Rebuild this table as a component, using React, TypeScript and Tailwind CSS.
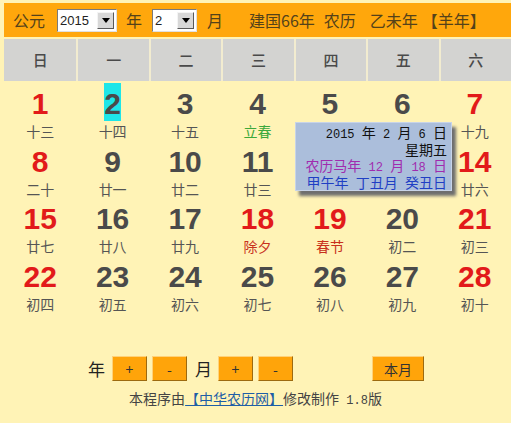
import React from "react";

const cjk = "font-['Noto_Sans_CJK_SC','Noto_Sans',sans-serif]";
const arial = "font-['Liberation_Sans',Arial,sans-serif]";
const mono = "font-['Liberation_Mono','Courier_New',monospace] text-[12px] leading-none";

type Day = { d: number; l: string; red?: boolean; lc?: string; today?: boolean; hidden?: boolean; hideLunar?: boolean };

const days: Day[] = [
  { d: 1, l: "十三", red: true },
  { d: 2, l: "十四", today: true },
  { d: 3, l: "十五" },
  { d: 4, l: "立春", lc: "text-[#3ca83c]" },
  { d: 5, l: "十七", hideLunar: true },
  { d: 6, l: "十八", hideLunar: true },
  { d: 7, l: "十九", red: true },
  { d: 8, l: "二十", red: true },
  { d: 9, l: "廿一" },
  { d: 10, l: "廿二" },
  { d: 11, l: "廿三" },
  { d: 12, l: "廿四", hidden: true },
  { d: 13, l: "廿五", hidden: true },
  { d: 14, l: "廿六", red: true },
  { d: 15, l: "廿七", red: true },
  { d: 16, l: "廿八" },
  { d: 17, l: "廿九" },
  { d: 18, l: "除夕", red: true, lc: "text-[#c8301c]" },
  { d: 19, l: "春节", red: true, lc: "text-[#c8301c]" },
  { d: 20, l: "初二" },
  { d: 21, l: "初三", red: true },
  { d: 22, l: "初四", red: true },
  { d: 23, l: "初五" },
  { d: 24, l: "初六" },
  { d: 25, l: "初七" },
  { d: 26, l: "初八" },
  { d: 27, l: "初九" },
  { d: 28, l: "初十", red: true },
];

const weekdays = ["日", "一", "二", "三", "四", "五", "六"];

function FakeSelect({ value, w }: { value: string; w: string }) {
  return (
    <div
      className={`${w} h-[23px] bg-white border border-t-[#7a7a7a] border-l-[#7a7a7a] border-r-[#e0e0e0] border-b-[#e0e0e0] flex items-center justify-between pl-[2px] pr-[2px]`}
    >
      <span className={`${arial} text-[13px] text-[#222] leading-none`}>{value}</span>
      <span className="w-[17px] h-[17px] bg-[#d8d8d8] border border-t-[#f4f4f4] border-l-[#f4f4f4] border-r-[#5a5a5a] border-b-[#5a5a5a] flex items-center justify-center">
        <svg width="8" height="5" viewBox="0 0 8 5">
          <path d="M0 0 H8 L4 5 Z" fill="#000" />
        </svg>
      </span>
    </div>
  );
}

function Btn({ children, w }: { children: React.ReactNode; w: string }) {
  return (
    <div
      className={`${w} h-[25px] bg-[#ffa40a] border border-t-[#ffd27a] border-l-[#ffd27a] border-r-[#9c6a10] border-b-[#9c6a10] flex items-center justify-center text-[14px] text-[#333] leading-none`}
    >
      {children}
    </div>
  );
}

function TipLine({ children, color }: { children: React.ReactNode; color: string }) {
  return (
    <div className={`h-[16.5px] leading-[16.5px] text-right whitespace-pre ${color}`}>{children}</div>
  );
}

export default function App() {
  return (
    <div className={`${cjk} relative w-[511px] h-[423px] overflow-hidden bg-[#fff3b6] pt-[3px] pl-[4px]`}>
      {/* header */}
      <div className="h-[34px] bg-[#ffa70c] flex items-center pl-[9px] text-[16px] text-[#54421a] leading-none">
        <span>公元</span>
        <div className="ml-[12px]">
          <FakeSelect value="2015" w="w-[60px]" />
        </div>
        <span className="ml-[9px]">年</span>
        <div className="ml-[10px]">
          <FakeSelect value="2" w="w-[45px]" />
        </div>
        <span className="ml-[10px]">月</span>
        <span className="ml-[26px]">建国66年</span>
        <span className="ml-[9px]">农历</span>
        <span className="ml-[14px]">乙未年</span>
        <span className="ml-[4px]">【羊年】</span>
      </div>

      {/* weekday bar */}
      <div className="mt-[2px] h-[42px] grid grid-cols-7 bg-[#d3d3d1]">
        {weekdays.map((w, i) => (
          <div
            key={w}
            className={`flex items-center justify-center text-[15px] font-medium text-[#4a4a4a] ${i > 0 ? "border-l-2 border-[#f2ecd0]" : ""}`}
          >
            {w}
          </div>
        ))}
      </div>

      {/* days */}
      <div className="mt-[2px] grid grid-cols-7">
        {days.map((x) => (
          <div key={x.d} className={`h-[57.5px] flex flex-col items-center ${x.hidden ? "invisible" : ""}`}>
            <span
              className={`${arial} font-bold text-[30px] leading-[35px] h-[38px] pt-[3px] ${
                x.red ? "text-[#e21a1a]" : "text-[#4a4a4a]"
              } ${x.today ? "bg-[#1ee6e8]" : ""}`}
            >
              {x.d}
            </span>
            <span className={`text-[14px] leading-[18px] mt-[1px] ${x.lc ?? "text-[#555]"} ${x.hideLunar ? "invisible" : ""}`}>
              {x.l}
            </span>
          </div>
        ))}
      </div>

      {/* tooltip */}
      <div className="absolute left-[295px] top-[122px] w-[157px] h-[69px] bg-[#abbedb] border border-[#c8d4e8] shadow-[4px_5px_3px_#6e6e6e] pr-[4px] pt-[1px] text-[14px]">
        <TipLine color="text-[#111]">
          <span className={mono}>2015 </span>年<span className={mono}> 2 </span>月<span className={mono}> 6 </span>日
        </TipLine>
        <TipLine color="text-[#111]">星期五</TipLine>
        <TipLine color="text-[#a02cae]">
          农历马年<span className={mono}> 12 </span>月<span className={mono}> 18 </span>日
        </TipLine>
        <TipLine color="text-[#1f3fc4]">
          甲午年<span className={mono}> </span>丁丑月<span className={mono}> </span>癸丑日
        </TipLine>
      </div>

      {/* controls */}
      <div className="mt-[43px] flex items-center">
        <span className="ml-[84px] text-[17px] text-[#222]">年</span>
        <div className="ml-[7px]">
          <Btn w="w-[35px]">+</Btn>
        </div>
        <div className="ml-[5px]">
          <Btn w="w-[35px]">-</Btn>
        </div>
        <span className="ml-[8px] text-[17px] text-[#222]">月</span>
        <div className="ml-[6px]">
          <Btn w="w-[35px]">+</Btn>
        </div>
        <div className="ml-[5px]">
          <Btn w="w-[35px]">-</Btn>
        </div>
        <div className="ml-[79px]">
          <Btn w="w-[52px]">本月</Btn>
        </div>
      </div>

      {/* footer */}
      <div className="mt-[6px] -ml-[4px] text-center text-[14px] text-[#444] leading-[20px] whitespace-pre">
        本程序由<span className="text-[#1e5ea6] underline">【中华农历网】</span>修改制作<span className={mono}> 1.8</span>版
      </div>
    </div>
  );
}
